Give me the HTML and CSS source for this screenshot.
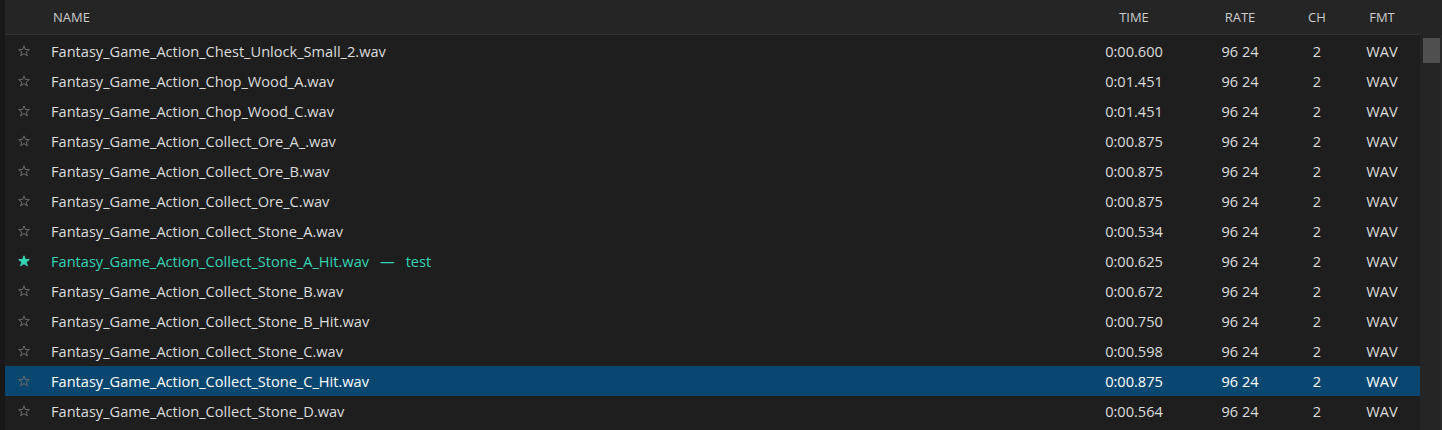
FILE: index.html
```html
<!DOCTYPE html>
<html>
<head>
<meta charset="utf-8">
<link rel="stylesheet" href="styles.css">
</head>
<body>
<div class="app">
  <div class="strip"></div>
  <div class="main">
    <div class="header">
      <div class="cols">
        <div></div>
        <div class="hname">NAME</div>
        <div class="c">TIME</div>
        <div class="c">RATE</div>
        <div class="c">CH</div>
        <div class="c">FMT</div>
      </div>
      <div class="hpad"></div>
    </div>
    <div class="body">
      <div class="rows">
        <div class="cols row"><div class="star"><svg viewBox="0 0 12 12"><polygon points="6,0.8 7.4,4.5 11.3,4.6 8.2,7 9.4,10.9 6,8.6 2.6,10.9 3.8,7 0.7,4.6 4.6,4.5"/></svg></div><div class="name">Fantasy_Game_Action_Chest_Unlock_Small_2.wav</div><div class="c">0:00.600</div><div class="c">96 24</div><div class="c">2</div><div class="c">WAV</div></div>
        <div class="cols row"><div class="star"><svg viewBox="0 0 12 12"><polygon points="6,0.8 7.4,4.5 11.3,4.6 8.2,7 9.4,10.9 6,8.6 2.6,10.9 3.8,7 0.7,4.6 4.6,4.5"/></svg></div><div class="name">Fantasy_Game_Action_Chop_Wood_A.wav</div><div class="c">0:01.451</div><div class="c">96 24</div><div class="c">2</div><div class="c">WAV</div></div>
        <div class="cols row"><div class="star"><svg viewBox="0 0 12 12"><polygon points="6,0.8 7.4,4.5 11.3,4.6 8.2,7 9.4,10.9 6,8.6 2.6,10.9 3.8,7 0.7,4.6 4.6,4.5"/></svg></div><div class="name">Fantasy_Game_Action_Chop_Wood_C.wav</div><div class="c">0:01.451</div><div class="c">96 24</div><div class="c">2</div><div class="c">WAV</div></div>
        <div class="cols row"><div class="star"><svg viewBox="0 0 12 12"><polygon points="6,0.8 7.4,4.5 11.3,4.6 8.2,7 9.4,10.9 6,8.6 2.6,10.9 3.8,7 0.7,4.6 4.6,4.5"/></svg></div><div class="name">Fantasy_Game_Action_Collect_Ore_A_.wav</div><div class="c">0:00.875</div><div class="c">96 24</div><div class="c">2</div><div class="c">WAV</div></div>
        <div class="cols row"><div class="star"><svg viewBox="0 0 12 12"><polygon points="6,0.8 7.4,4.5 11.3,4.6 8.2,7 9.4,10.9 6,8.6 2.6,10.9 3.8,7 0.7,4.6 4.6,4.5"/></svg></div><div class="name">Fantasy_Game_Action_Collect_Ore_B.wav</div><div class="c">0:00.875</div><div class="c">96 24</div><div class="c">2</div><div class="c">WAV</div></div>
        <div class="cols row"><div class="star"><svg viewBox="0 0 12 12"><polygon points="6,0.8 7.4,4.5 11.3,4.6 8.2,7 9.4,10.9 6,8.6 2.6,10.9 3.8,7 0.7,4.6 4.6,4.5"/></svg></div><div class="name">Fantasy_Game_Action_Collect_Ore_C.wav</div><div class="c">0:00.875</div><div class="c">96 24</div><div class="c">2</div><div class="c">WAV</div></div>
        <div class="cols row"><div class="star"><svg viewBox="0 0 12 12"><polygon points="6,0.8 7.4,4.5 11.3,4.6 8.2,7 9.4,10.9 6,8.6 2.6,10.9 3.8,7 0.7,4.6 4.6,4.5"/></svg></div><div class="name">Fantasy_Game_Action_Collect_Stone_A.wav</div><div class="c">0:00.534</div><div class="c">96 24</div><div class="c">2</div><div class="c">WAV</div></div>
        <div class="cols row fav"><div class="star"><svg viewBox="0 0 12 12"><polygon points="6,0.8 7.4,4.5 11.3,4.6 8.2,7 9.4,10.9 6,8.6 2.6,10.9 3.8,7 0.7,4.6 4.6,4.5"/></svg></div><div class="name">Fantasy_Game_Action_Collect_Stone_A_Hit.wav<span class="note">—</span><span class="note">test</span></div><div class="c">0:00.625</div><div class="c">96 24</div><div class="c">2</div><div class="c">WAV</div></div>
        <div class="cols row"><div class="star"><svg viewBox="0 0 12 12"><polygon points="6,0.8 7.4,4.5 11.3,4.6 8.2,7 9.4,10.9 6,8.6 2.6,10.9 3.8,7 0.7,4.6 4.6,4.5"/></svg></div><div class="name">Fantasy_Game_Action_Collect_Stone_B.wav</div><div class="c">0:00.672</div><div class="c">96 24</div><div class="c">2</div><div class="c">WAV</div></div>
        <div class="cols row"><div class="star"><svg viewBox="0 0 12 12"><polygon points="6,0.8 7.4,4.5 11.3,4.6 8.2,7 9.4,10.9 6,8.6 2.6,10.9 3.8,7 0.7,4.6 4.6,4.5"/></svg></div><div class="name">Fantasy_Game_Action_Collect_Stone_B_Hit.wav</div><div class="c">0:00.750</div><div class="c">96 24</div><div class="c">2</div><div class="c">WAV</div></div>
        <div class="cols row"><div class="star"><svg viewBox="0 0 12 12"><polygon points="6,0.8 7.4,4.5 11.3,4.6 8.2,7 9.4,10.9 6,8.6 2.6,10.9 3.8,7 0.7,4.6 4.6,4.5"/></svg></div><div class="name">Fantasy_Game_Action_Collect_Stone_C.wav</div><div class="c">0:00.598</div><div class="c">96 24</div><div class="c">2</div><div class="c">WAV</div></div>
        <div class="cols row sel"><div class="star"><svg viewBox="0 0 12 12"><polygon points="6,0.8 7.4,4.5 11.3,4.6 8.2,7 9.4,10.9 6,8.6 2.6,10.9 3.8,7 0.7,4.6 4.6,4.5"/></svg></div><div class="name">Fantasy_Game_Action_Collect_Stone_C_Hit.wav</div><div class="c">0:00.875</div><div class="c">96 24</div><div class="c">2</div><div class="c">WAV</div></div>
        <div class="cols row"><div class="star"><svg viewBox="0 0 12 12"><polygon points="6,0.8 7.4,4.5 11.3,4.6 8.2,7 9.4,10.9 6,8.6 2.6,10.9 3.8,7 0.7,4.6 4.6,4.5"/></svg></div><div class="name">Fantasy_Game_Action_Collect_Stone_D.wav</div><div class="c">0:00.564</div><div class="c">96 24</div><div class="c">2</div><div class="c">WAV</div></div>
      </div>
      <div class="scroll"><div class="thumb"></div></div>
    </div>
  </div>
</div>
</body>
</html>
```

FILE: styles.css
```css
html, body {
  margin: 0;
  padding: 0;
  background: #1e1e1e;
  height: 100%;
  overflow: hidden;
}
.app {
  display: flex;
  height: 430px;
  font-family: "Open Sans", "Noto Sans", sans-serif;
}
.strip {
  width: 5px;
  background: #181818;
  flex: none;
}
.main {
  flex: 1;
  display: flex;
  flex-direction: column;
  min-width: 0;
}
.header {
  display: flex;
  height: 35px;
  background: #252526;
  flex: none;
}
.header .cols {
  width: 1415px;
  border-bottom: 1px solid #333333;
  box-sizing: border-box;
  color: #cccccc;
  font-size: 13px;
  align-items: center;
}
.hpad {
  flex: 1;
}
.cols {
  display: grid;
  grid-template-columns: 38px 1035px 112px 100px 54px 76px;
  align-items: center;
}
.hname {
  padding-left: 10px;
}
.c {
  text-align: center;
}
.body {
  flex: 1;
  display: flex;
  min-height: 0;
}
.rows {
  width: 1415px;
  padding-top: 1px;
}
.row {
  height: 30px;
  color: #dcdcdc;
  font-size: 14.6px;
}
.name {
  padding-left: 8px;
  white-space: nowrap;
}
.star {
  display: flex;
  justify-content: center;
  align-items: center;
}
.star svg {
  width: 12px;
  height: 12px;
  display: block;
}
.star polygon {
  fill: none;
  stroke: #6a6a6a;
  stroke-width: 1;
  stroke-linejoin: round;
}
.fav .name {
  color: #33d4b4;
}
.fav .star polygon {
  fill: #33d4b4;
  stroke: #33d4b4;
}
.note {
  margin-left: 11px;
}
.sel {
  background: #094771;
  color: #ffffff;
}
.scroll {
  flex: 1;
  background: #252526;
  padding: 3px 1px 0 3px;
  border-right: 1px solid #2e2e2e;
}
.thumb {
  height: 25px;
  background: #4f4f4f;
}
```
